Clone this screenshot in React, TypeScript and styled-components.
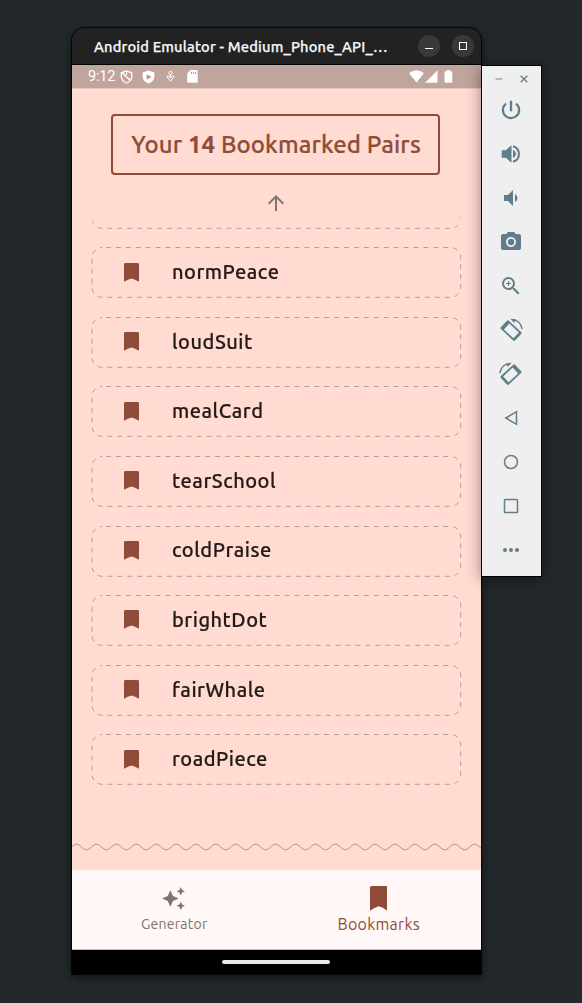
import React from 'react';
import styled, { createGlobalStyle } from 'styled-components';
import {
  MdArrowUpward,
  MdAutoAwesome,
  MdPhotoCamera,
  MdVolumeDown,
  MdZoomIn,
} from 'react-icons/md';

const primary = '#8f4c38';
const container = '#ffdbd1';
const muted = '#7b7573';
const steel = '#607d8b';

const GlobalStyle = createGlobalStyle`
  * { box-sizing: border-box; }
  body {
    margin: 0;
    background: #22282b;
    font-family: Ubuntu, "Noto Sans", sans-serif;
    overflow: hidden;
  }
`;

const Desktop = styled.main`
  display: flex;
  align-items: flex-start;
  width: 582px;
  height: 1003px;
  padding: 27px 0 0 71px;
`;

const Phone = styled.section`
  display: flex;
  flex-direction: column;
  width: 411px;
  height: 948px;
  flex: none;
  border: 1px solid #050505;
  border-radius: 13px 13px 0 0;
  background: #000;
  overflow: hidden;
  box-shadow: 0 3px 9px rgba(0, 0, 0, 0.5);
`;

const TitleBar = styled.header`
  display: flex;
  align-items: center;
  height: 37px;
  flex: none;
  padding: 0 7px 0 22px;
  background: #222;
  border-bottom: 1px solid #000;
`;

const WindowTitle = styled.div`
  flex: 1;
  color: #f7f7f7;
  font-size: 14.67px;
  font-weight: 500;
  letter-spacing: 0.18px;
  white-space: nowrap;
  -webkit-text-stroke: 0.25px #f7f7f7;
`;

const RoundButton = styled.button`
  display: grid;
  place-items: center;
  width: 22px;
  height: 22px;
  margin-left: 12px;
  padding: 0;
  border: 0;
  border-radius: 50%;
  background: #393939;
`;

const StatusBar = styled.div`
  display: flex;
  align-items: center;
  height: 24px;
  flex: none;
  padding: 0 28px 0 16px;
  background: #c0a59d;
  border-bottom: 1px solid #e7c7be;
`;

const Clock = styled.span`
  width: 32px;
  color: #fff;
  font: 400 14.5px/22px Roboto, sans-serif;
  letter-spacing: -0.2px;
`;

const StatusIcon = styled.svg<{ $gap?: number }>`
  flex: none;
  margin-right: ${(p) => p.$gap ?? 0}px;
`;

const Spacer = styled.span`
  flex: 1;
`;

const Screen = styled.div`
  display: flex;
  flex-direction: column;
  align-items: center;
  height: 781px;
  flex: none;
  padding: 25px 2px 0 0;
  background: ${container};
`;

const Heading = styled.h1`
  display: grid;
  place-items: center;
  width: 329px;
  height: 61px;
  flex: none;
  margin: 0;
  border: 2px solid ${primary};
  border-radius: 4px;
  color: ${primary};
  font-size: 24px;
  font-weight: 500;
  letter-spacing: 0.1px;
  white-space: nowrap;
  -webkit-text-stroke: 0.2px ${primary};
  b { font-weight: 700; }
  span { margin-left: 1px; }
`;

const UpArrow = styled(MdArrowUpward)`
  flex: none;
  margin-top: 16px;
  color: ${muted};
`;

const List = styled.ul`
  display: flex;
  flex-direction: column;
  gap: 18.6px;
  width: 371px;
  height: 625px;
  flex: none;
  margin: -1px 0 0 2px;
  padding: 0;
  list-style: none;
  overflow: hidden;
  mask-image: linear-gradient(transparent, #000 15px);
  & > :first-child { margin-top: -36.3px; }
`;

const Card = styled.li`
  display: grid;
  grid-template-columns: 81px 1fr;
  align-items: center;
  height: 51px;
  flex: none;
`;

const Outline = styled.svg`
  grid-area: 1 / 1 / 2 / 3;
  fill: none;
  stroke: #aaa09d;
`;

const CardMark = styled.span`
  display: flex;
  grid-area: 1 / 1;
  margin-top: -1.6px;
  padding-left: 33px;
  color: ${primary};
`;

const Word = styled.span`
  grid-area: 1 / 2;
  margin-top: -1.7px;
  color: #231917;
  font-size: 20px;
  font-weight: 500;
  line-height: 28px;
  letter-spacing: 0.52px;
  -webkit-text-stroke: 0.2px #231917;
`;

const WaveLine = styled.svg`
  align-self: flex-start;
  flex: none;
  margin-top: 3px;
  fill: none;
  stroke: #b8958b;
`;

const NavBar = styled.nav`
  display: grid;
  grid-template-columns: 1fr 1fr;
  height: 80px;
  flex: none;
  background: #fff8f6;
  border-bottom: 1px solid #c9c2c0;
`;

const NavItem = styled.a<{ $active?: boolean }>`
  display: flex;
  flex-direction: column;
  align-items: center;
  padding-top: 16px;
  color: ${(p) => (p.$active ? primary : muted)};
  font-size: ${(p) => (p.$active ? 16 : 14)}px;
  font-weight: 400;
  line-height: 27px;
  letter-spacing: ${(p) => (p.$active ? 0.25 : 0.25)}px;
  svg { height: 25px; margin-right: 1px; }
`;

const HomeArea = styled.div`
  display: flex;
  justify-content: center;
  padding: 10px 2px 0 0;
`;

const HomeHandle = styled.div`
  width: 108px;
  height: 4px;
  border-radius: 2px;
  background: #e8e8e8;
`;

const Toolbar = styled.aside`
  display: flex;
  flex-direction: column;
  width: 61px;
  height: 512px;
  flex: none;
  margin: 38px 0 0 -1px;
  border: 1px solid #000;
  background: #efefef;
  box-shadow: 0 2px 14px rgba(0, 0, 0, 0.42);
  color: ${steel};
  z-index: 1;
`;

const ToolbarTop = styled.div`
  display: flex;
  align-items: center;
  justify-content: space-between;
  height: 22px;
  flex: none;
  padding: 4px 13px 0;
`;

const Tool = styled.button`
  display: grid;
  place-items: center;
  height: 44px;
  flex: none;
  padding: 0 1px 0 0;
  border: 0;
  background: none;
  color: inherit;
`;

const LineIcon = styled.svg`
  fill: none;
  stroke: currentColor;
  stroke-width: 1.5px;
`;

function BookmarkIcon({ width, height }: { width: number; height: number }) {
  return (
    <svg width={width} height={height} viewBox="0 0 15 19" preserveAspectRatio="none" fill="currentColor">
      <path d="M0 1.4Q0 0 1.4 0H13.6Q15 0 15 1.4V18.8Q11 16.2 7.5 15.4Q4 16.2 0 18.8Z" />
    </svg>
  );
}

function DashedOutline() {
  return (
    <Outline width="371" height="51">
      <rect x="1" y="0.5" width="368.7" height="49.8" rx="10" strokeDasharray="4.96 4.96" strokeDashoffset="-4" />
    </Outline>
  );
}

const wave = Array.from({ length: 206 }, (_, i) => {
  const x = i * 2;
  const y = 5 - 2.9 * Math.cos(((x - 4.6) / 19.9) * Math.PI * 2);
  return `${i ? 'L' : 'M'}${x} ${y.toFixed(2)}`;
}).join('');

function RotateIcon({ mirrored }: { mirrored?: boolean }) {
  return (
    <svg width="24" height="24" viewBox="0 0 24 24" overflow="visible">
      <g transform={mirrored ? 'translate(24 0) scale(-1 1)' : undefined}>
        <g transform="translate(12 12.6) rotate(43)">
          <path
            fill="currentColor"
            fillRule="evenodd"
            d="M-8.4-5.8H8.4Q9.7-5.8 9.7-4.5V4.5Q9.7 5.8 8.4 5.8H-8.4Q-9.7 5.8-9.7 4.5V-4.5Q-9.7-5.8-8.4-5.8ZM-6-4V4H7V-4Z"
          />
        </g>
        <path d="M13 1.6Q21.5 2 23.2 11.2" fill="none" stroke="currentColor" strokeWidth="1.3" />
        <path d="M11.3 0.8L16.8 1.2L15.2 4.8Z" fill="currentColor" />
      </g>
    </svg>
  );
}

const words = [
  'normPeace',
  'loudSuit',
  'mealCard',
  'tearSchool',
  'coldPraise',
  'brightDot',
  'fairWhale',
  'roadPiece',
];

export default function App() {
  return (
    <>
      <GlobalStyle />
      <Desktop>
        <Phone>
          <TitleBar>
            <WindowTitle>Android Emulator - Medium_Phone_API_…</WindowTitle>
            <RoundButton aria-label="Minimize">
              <svg width="10" height="10"><path d="M1 7.5H9" stroke="#fff" /></svg>
            </RoundButton>
            <RoundButton aria-label="Maximize">
              <svg width="10" height="10"><rect x="1.5" y="1.5" width="7" height="7" fill="none" stroke="#fff" /></svg>
            </RoundButton>
          </TitleBar>
          <StatusBar>
            <Clock>9:12</Clock>
            <StatusIcon $gap={9} width="13" height="14" fill="none" stroke="#fff" strokeWidth="1.3">
              <path d="M6.5 1L11.7 2.8V6.5Q11.4 11 6.5 13Q1.6 11 1.3 6.5V2.8ZM2 2.5L10.6 10.8M6.5 1.2V5" />
            </StatusIcon>
            <StatusIcon $gap={11} width="13" height="14">
              <path d="M6.5 0.4L12.4 2.6V6.6Q12.1 11.5 6.5 13.6Q0.9 11.5 0.6 6.6V2.6Z" fill="#fff" />
              <path d="M4.7 4.3L9.4 7L4.7 9.7Z" fill="#b2948b" />
            </StatusIcon>
            <StatusIcon $gap={12} width="9" height="13" fill="none" stroke="#fff" strokeWidth="1">
              <circle cx="4.5" cy="3" r="1.6" />
              <path d="M4.5 4.7V8M0.8 6.5L4.5 11.2L8.2 6.5L6.2 5.8L4.5 8L2.8 5.8Z" />
            </StatusIcon>
            <StatusIcon width="11" height="13">
              <path d="M3.7 0H9.6Q10.7 0 10.7 1.1V11.7Q10.7 12.8 9.6 12.8H1.3Q0.2 12.8 0.2 11.7V3.6Z" fill="#fff" />
              <path d="M4.5 1.8V4M6.6 1.8V4M8.7 1.8V4" stroke="#b2948b" />
            </StatusIcon>
            <Spacer />
            <StatusIcon $gap={1} width="15" height="13">
              <path d="M0 3.2Q7.5-2.6 15 3.2L7.5 12.6Z" fill="#fff" />
            </StatusIcon>
            <StatusIcon $gap={6} width="13" height="13"><path d="M12.5 0.3V12.7H0.1Z" fill="#fff" /></StatusIcon>
            <StatusIcon width="9" height="13">
              <path d="M2.8 0H6V1.2H7.3Q8.3 1.2 8.3 2.2V11.7Q8.3 12.7 7.3 12.7H1.5Q0.5 12.7 0.5 11.7V2.2Q0.5 1.2 1.5 1.2H2.8Z" fill="#fff" />
            </StatusIcon>
          </StatusBar>
          <Screen>
            <Heading><span>Your <b>14</b> Bookmarked Pairs</span></Heading>
            <UpArrow size={24} />
            <List>
              <Card><DashedOutline /></Card>
              {words.map((word) => (
                <Card key={word}>
                  <DashedOutline />
                  <CardMark><BookmarkIcon width={15} height={19} /></CardMark>
                  <Word>{word}</Word>
                </Card>
              ))}
            </List>
            <WaveLine width="409" height="10"><path d={wave} /></WaveLine>
          </Screen>
          <NavBar>
            <NavItem>
              <MdAutoAwesome size={25} />
              Generator
            </NavItem>
            <NavItem $active>
              <BookmarkIcon width={17.5} height={23} />
              Bookmarks
            </NavItem>
          </NavBar>
          <HomeArea><HomeHandle /></HomeArea>
        </Phone>
        <Toolbar>
          <ToolbarTop>
            <svg width="8" height="10"><path d="M0.5 5H7.5" stroke="#a0b1b9" strokeWidth="1.6" /></svg>
            <svg width="8" height="10"><path d="M0.7 1.7L7.3 8.3M7.3 1.7L0.7 8.3" stroke={steel} strokeWidth="1.3" /></svg>
          </ToolbarTop>
          <Tool>
            <svg width="24" height="24" fill="none" stroke="currentColor" strokeWidth="2.3">
              <path d="M12 2.8V13.2M7 5.7A8.1 8.1 0 1 0 17 5.7" />
            </svg>
          </Tool>
          <Tool>
            <svg width="24" height="24" fill="currentColor">
              <path d="M2.7 8.2H6.8L12.5 3.3V20.7L6.8 15.8H2.7ZM14 7.8Q17 9.2 17 12T14 16.2Z" />
              <path d="M14 4.2A8.1 8.1 0 0 1 14 19.8" fill="none" stroke="currentColor" strokeWidth="2" />
            </svg>
          </Tool>
          <Tool><MdVolumeDown size={24} /></Tool>
          <Tool><MdPhotoCamera size={24} /></Tool>
          <Tool><MdZoomIn size={24} /></Tool>
          <Tool><RotateIcon /></Tool>
          <Tool><RotateIcon mirrored /></Tool>
          <Tool><LineIcon width="24" height="24"><path d="M17.5 5.7V18.3L6.8 12Z" /></LineIcon></Tool>
          <Tool><LineIcon width="24" height="24"><circle cx="12" cy="12" r="6.5" /></LineIcon></Tool>
          <Tool><LineIcon width="24" height="24"><rect x="5.5" y="5.5" width="13" height="13" rx="0.8" /></LineIcon></Tool>
          <Tool>
            <svg width="24" height="24" fill="currentColor"><circle cx="6" cy="12" r="2" /><circle cx="12" cy="12" r="2" /><circle cx="18" cy="12" r="2" /></svg>
          </Tool>
        </Toolbar>
      </Desktop>
    </>
  );
}
